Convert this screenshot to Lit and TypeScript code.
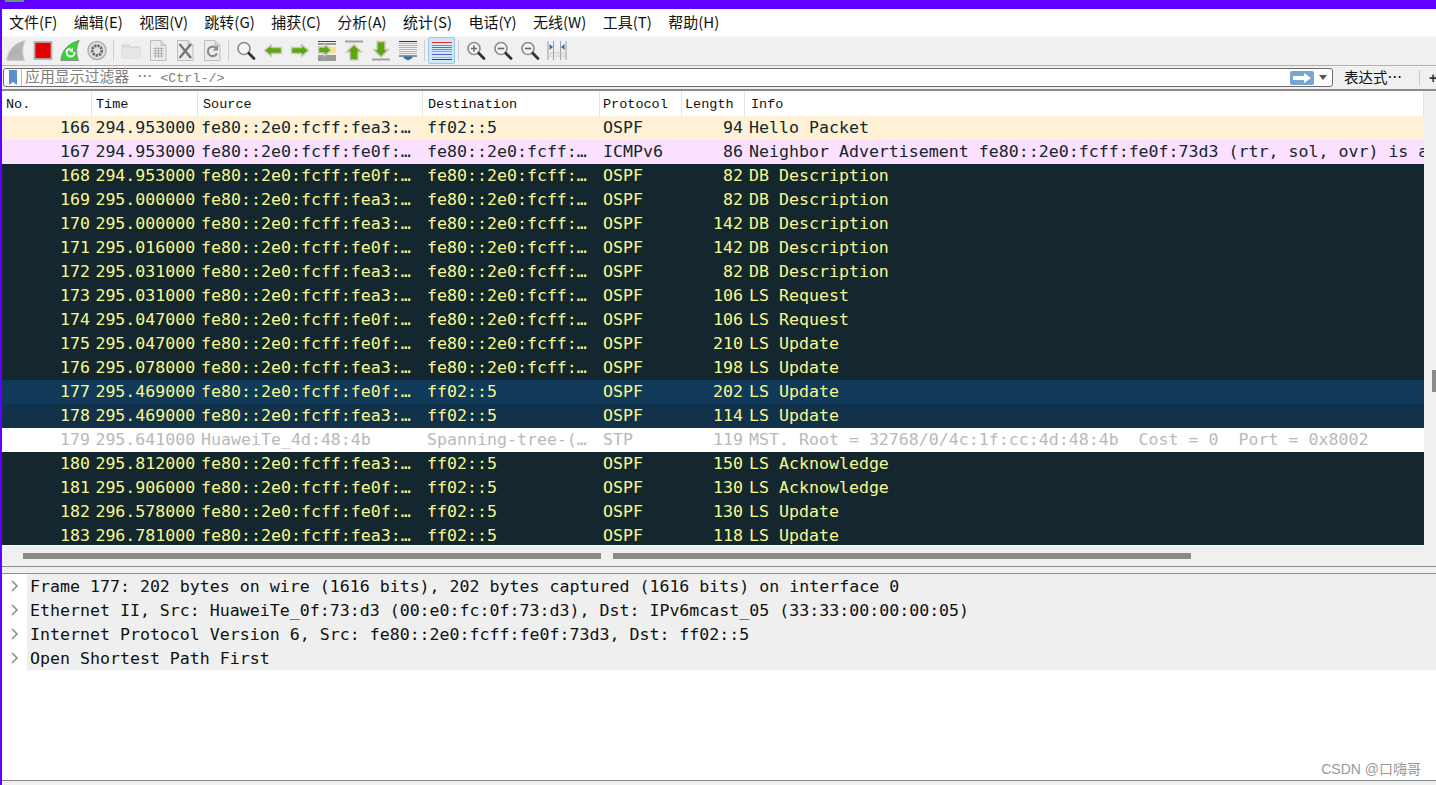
import { LitElement, html, css, svg } from "lit";
import { customElement } from "lit/decorators.js";

const F3 = "fe80::2e0:fcff:fea3:…";
const F0 = "fe80::2e0:fcff:fe0f:…";
const D = "fe80::2e0:fcff:…";
const M = "ff02::5";
type R = [number, string, string, string, string, number, string, string];
const rows: R[] = [
  [166, "294.953000", F3, M, "OSPF", 94, "Hello Packet", "hello"],
  [167, "294.953000", F0, D, "ICMPv6", 86, "Neighbor Advertisement fe80::2e0:fcff:fe0f:73d3 (rtr, sol, ovr) is a", "icmp"],
  [168, "294.953000", F0, D, "OSPF", 82, "DB Description", "dark"],
  [169, "295.000000", F3, D, "OSPF", 82, "DB Description", "dark"],
  [170, "295.000000", F3, D, "OSPF", 142, "DB Description", "dark"],
  [171, "295.016000", F0, D, "OSPF", 142, "DB Description", "dark"],
  [172, "295.031000", F3, D, "OSPF", 82, "DB Description", "dark"],
  [173, "295.031000", F3, D, "OSPF", 106, "LS Request", "dark"],
  [174, "295.047000", F0, D, "OSPF", 106, "LS Request", "dark"],
  [175, "295.047000", F0, D, "OSPF", 210, "LS Update", "dark"],
  [176, "295.078000", F3, D, "OSPF", 198, "LS Update", "dark"],
  [177, "295.469000", F0, M, "OSPF", 202, "LS Update", "sel"],
  [178, "295.469000", F3, M, "OSPF", 114, "LS Update", "rel"],
  [179, "295.641000", "HuaweiTe_4d:48:4b", "Spanning-tree-(…", "STP", 119, "MST. Root = 32768/0/4c:1f:cc:4d:48:4b  Cost = 0  Port = 0x8002", "stp"],
  [180, "295.812000", F3, M, "OSPF", 150, "LS Acknowledge", "dark"],
  [181, "295.906000", F0, M, "OSPF", 130, "LS Acknowledge", "dark"],
  [182, "296.578000", F0, M, "OSPF", 130, "LS Update", "dark"],
  [183, "296.781000", F3, M, "OSPF", 118, "LS Update", "dark"],
];
const menus = ["文件(F)", "编辑(E)", "视图(V)", "跳转(G)", "捕获(C)", "分析(A)", "统计(S)", "电话(Y)", "无线(W)", "工具(T)", "帮助(H)"];
const details = [
  "Frame 177: 202 bytes on wire (1616 bits), 202 bytes captured (1616 bits) on interface 0",
  "Ethernet II, Src: HuaweiTe_0f:73:d3 (00:e0:fc:0f:73:d3), Dst: IPv6mcast_05 (33:33:00:00:00:05)",
  "Internet Protocol Version 6, Src: fe80::2e0:fcff:fe0f:73d3, Dst: ff02::5",
  "Open Shortest Path First",
];
const heads = ["No.", "Time", "Source", "Destination", "Protocol", "Length", "Info"];

const lines = (ys: number[], c = "#555") => ys.map((y) => svg`<line x1="1" x2="19" y1=${y} y2=${y} stroke=${c} stroke-width="1"/>`);
const glass = (inner: unknown = "") => svg`<circle cx="8" cy="8.5" r="6" fill="#f4f4f4" stroke="#8d8d8d" stroke-width="1.7"/>${inner}<line x1="12.8" y1="13.3" x2="18" y2="18.5" stroke="#333" stroke-width="2.8" stroke-linecap="round"/>`;
const doc = (inner: unknown) => svg`<path d="M2.5 .5H13L18 5.5V20.5H2.5Z" fill="#ececec" stroke="#bdbdbd"/><path d="M13 .5V5.5H18" fill="#d4d4d4" stroke="#bdbdbd"/>${inner}`;
const arrow = (d: string) => svg`<path d=${d} fill="#5ea512" stroke="#c4ccba" stroke-width="1.5" stroke-linejoin="round"/>`;
const stripe = (y: number, c: string) => svg`<rect x="0" y=${y} width="20" height="1" fill=${c} shape-rendering="crispEdges"/>`;
const icons: Record<string, unknown> = {
  fin: svg`<path d="M.8 20.5C1.5 11 8 3 19.2 .5C16 7 16 14 18.5 20.5Z" fill="#b4b4b4" stroke="#cdcdcd"/>`,
  stop: svg`<rect x="1.5" y="2" width="17" height="17" fill="#e30000" stroke="#b0b0b0" stroke-width="1.8"/>`,
  restart: svg`<path d="M.8 20.5C1.5 11 8 3 19.2 .5C16 7 16 14 18.5 20.5Z" fill="#2ed52e" stroke="#8f8f8f"/><path d="M14.5 12A4 4 0 1 1 10.5 8.5" fill="none" stroke="#fff" stroke-width="2"/><path d="M9 11L13 7.5V12.5Z" fill="#fff"/>`,
  gear: svg`<circle cx="10" cy="10.5" r="9" fill="#e2e2e2" stroke="#b0b0b0" stroke-width="1.5"/><circle cx="10" cy="10.5" r="4.8" fill="none" stroke="#6e6e6e" stroke-width="2.8" stroke-dasharray="2.4 .8"/><circle cx="10" cy="10.5" r="2" fill="#dcdcdc"/>`,
  folder: svg`<path d="M1 5H8L9.5 7H19V18H1Z" fill="#dcdcdc" stroke="#d2d2d2"/><rect x="1" y="8" width="18" height="10" fill="#e6e6e6"/>`,
  file: doc(svg`<path d="M5.5 8.5H15.5M5.5 11H15.5M5.5 13.5H15.5M5.5 16H15.5M7.5 7V18M10.5 7V18M13.5 7V18" stroke="#b3b3b3" stroke-width="1" fill="none"/>`),
  close: doc(svg`<path d="M4.5 4L16 18M16 4L4.5 18" stroke="#757575" stroke-width="2.4"/>`),
  reload: doc(svg`<path d="M14.5 8.5A4.8 4.8 0 1 0 15 13.5" fill="none" stroke="#8a8a8a" stroke-width="2.2"/><path d="M16 5V10.5H10.8Z" fill="#8a8a8a"/>`),
  search: glass(),
  back: arrow("M1.5 10.5L8.5 4.5V7.5H18.5V13.5H8.5V16.5Z"),
  fwd: arrow("M18.5 10.5L11.5 4.5V7.5H1.5V13.5H11.5V16.5Z"),
  jump: svg`${lines([1.5, 4, 16, 18, 20], "#444")}<rect x="11" y="6.5" width="8" height="7" fill="#f3e88a"/>${arrow("M14 10L7.5 4V7H1.5V13H7.5V16Z")}`,
  top: svg`<line x1="1" x2="19" y1="1.5" y2="1.5" stroke="#a0a0a0" stroke-width="2"/>${arrow("M10 4.5L17.5 12H14V20H6V12H2.5Z")}`,
  bottom: svg`<line x1="1" x2="19" y1="19.5" y2="19.5" stroke="#a0a0a0" stroke-width="2"/>${arrow("M10 17L17.5 9.5H14V1.5H6V9.5H2.5Z")}`,
  auto: svg`${lines([1.5], "#333")}${lines([3.5, 5.5, 7.5, 9.5, 11.5, 13.5], "#b5b5b5")}${lines([16], "#333")}<path d="M5.5 16.5H14.5V18L10 20.5L5.5 18Z" fill="#2c6fb3"/>`,
  color: svg`${stripe(2, "#e82828")}${stripe(5, "#6f8fe0")}${stripe(7, "#f03a4a")}${stripe(9, "#a070e0")}${stripe(11, "#74d040")}${stripe(14, "#4a60c8")}${stripe(17, "#eab020")}${stripe(19, "#444")}`,
  zin: glass(svg`<path d="M4.8 8.5H11.2M8 5.3V11.7" stroke="#6a6a6a" stroke-width="1.5"/>`),
  zout: glass(svg`<path d="M4.8 8.5H11.2" stroke="#6a6a6a" stroke-width="1.7"/>`),
  zreset: glass(svg`<path d="M4.8 8.5H11.2" stroke="#6a6a6a" stroke-width="1.7"/>`),
  resize: svg`<path d="M1 1V20M6.5 1V20M13.5 1V20M19 1V20" stroke="#9e9e9e" fill="none"/><path d="M1 13H19M1 16H19" stroke="#c8c8c8"/><path d="M2.5 4L6 7L2.5 10Z" fill="#2c6fb3"/><path d="M17.5 4L14 7L17.5 10Z" fill="#2c6fb3"/>`,
};
const bar: string[] = ["fin", "stop", "restart", "gear", "|", "folder", "file", "close", "reload", "|", "search", "back", "fwd", "jump", "top", "bottom", "auto", "|", "color", "|", "zin", "zout", "zreset", "resize"];

@customElement("app-root")
export class AppRoot extends LitElement {
  static styles = css`
    :host { display: block; width: 1436px; height: 785px; overflow: hidden; background: #fff; position: relative; }
    .app { height: 785px; box-sizing: border-box; border-left: 2px solid #6000ff; display: flex; flex-direction: column; font-family: "Liberation Mono", monospace; }
    .title { height: 9px; flex: none; margin-left: -2px; background: #6000ff; position: relative; }
    .title i { position: absolute; left: 5px; top: 0; width: 19px; height: 2px; background: #5e9c76; }
    .menu { height: 26px; flex: none; box-sizing: border-box; padding: 0 0 2px 7px; display: flex; align-items: center; gap: 16.4px; background: #fff; font: 15px "Noto Sans CJK SC", sans-serif; color: #111; }
    .menu span { white-space: nowrap; }
    .tools { height: 30px; flex: none; box-sizing: border-box; margin-top: 1px; display: flex; align-items: center; padding: 0 0 1px 0; background: #f0f0f0; border-top: 1px solid #f8f8f8; border-bottom: 1px solid #b2b2b2; }
    .tool { width: 27px; height: 27px; display: flex; align-items: center; justify-content: center; flex: none; box-sizing: border-box; }
    .tool svg { width: 20px; height: 21px; }
    .tool.on { background: #cfe5f8; border: 1px solid #9cc8ec; border-radius: 2px; }
    .sep { width: 1px; height: 21px; margin: 0 3px; background: #cfcfcf; flex: none; }
    .filter { height: 25px; flex: none; box-sizing: border-box; display: flex; align-items: center; padding-left: 1px; background: #f0f0f0; border-bottom: 2px solid #8c8c8c; }
    .field { width: 1330px; height: 19px; box-sizing: border-box; border: 1px solid #6e6e6e; border-radius: 3px; background: #fff; display: flex; align-items: center; flex: none; }
    .mark { width: 17px; height: 17px; border-right: 1px solid #bdbdbd; display: flex; align-items: center; justify-content: center; flex: none; }
    .ph { flex: 1; padding: 0 0 1px 3px; color: #7d7d7d; font-size: 13.4px; line-height: 16px; white-space: pre; }
    .ph b { font: 400 14.9px/16px "Noto Sans CJK SC", sans-serif; }
    .go { width: 24px; height: 14px; border-radius: 2px; background: #7ba4d3; display: flex; align-items: center; justify-content: center; flex: none; }
    .drop { width: 18px; display: flex; justify-content: center; flex: none; }
    .drop i { border-left: 4px solid transparent; border-right: 4px solid transparent; border-top: 5px solid #555; }
    .expr { margin: 0 0 2px 11px; font: 14.5px "Noto Sans CJK SC", sans-serif; color: #111; width: 75px; flex: none; white-space: nowrap; }
    .vsep { width: 1px; height: 15px; background: #c8c8c8; flex: none; }
    .plus { margin-left: 9px; font: bold 14px "Liberation Sans", sans-serif; color: #333; }
    .main { height: 475px; flex: none; display: flex; background: #f0f0f0; }
    .table { width: 1422px; flex: none; display: flex; flex-direction: column; overflow: hidden; background: #fff; }
    .head, .row { display: grid; grid-template-columns: 90px 106px 225px 177px 82px 63px 679px; }
    .head { height: 25px; flex: none; background: #fff; font-size: 13.5px; color: #111; }
    .head span { border-right: 1px solid #e4e4e4; padding-left: 4px; line-height: 28px; overflow: hidden; }
    .head span:nth-child(3), .head span:nth-child(4) { padding-left: 5px; }
    .head span:nth-child(5), .head span:nth-child(6) { padding-left: 3px; }
    .head span:nth-child(7) { padding-left: 6px; }
    .rows { height: 429px; flex: none; overflow: hidden; }
    .row { height: 24px; font: 16.6px/24px "DejaVu Sans Mono", monospace; white-space: pre; }
    .row span { padding-left: 4px; overflow: hidden; }
    .row .s { padding-left: 3px; }
    .row .n { text-align: right; padding: 0 2px 0 0; }
    .row .p { padding-left: 3px; }
    .hello { background: #fff1d5; color: #12272e; }
    .icmp { background: #fce0ff; color: #12272e; }
    .dark { background: #15272e; color: #f7f98e; }
    .sel { background: #10395a; color: #f7f98e; }
    .rel { background: #12314a; color: #f7f98e; }
    .stp { background: #fff; color: #b9b9b9; }
    .row .tm { padding-left: 3.4px; }
    .side { flex: 1; position: relative; }
    .thumb { position: absolute; right: 0; top: 279px; width: 4px; height: 22px; background: #8a8a8a; }
    .hs { flex: 1; background: #f0f0f0; display: flex; align-items: center; box-sizing: border-box; padding: 0 0 0 21px; gap: 12px; border-top: 1px solid #fff; }
    .hs i { width: 578px; height: 6px; background: #8a8a8a; display: block; flex: none; }
    .split { height: 8px; flex: none; box-sizing: border-box; background: #f0f0f0; border-top: 1px solid #8a8f99; border-bottom: 1px solid #8a8f99; }
    .detail { flex: 1; display: flex; flex-direction: column; background: #fff; font: 16.6px/26px "DejaVu Sans Mono", monospace; color: #111; }
    .line { height: 24px; flex: none; display: flex; background: #fff; white-space: pre; }
    .line svg { width: 25px; height: 24px; flex: none; }
    .line span { flex: 1; background: #efefef; padding-left: 3px; height: 24px; }
    .foot { height: 5px; flex: none; box-sizing: border-box; margin-top: auto; background: #f0f0f0; border-top: 1px solid #8a8a8a; }
    .mark2 { position: absolute; right: 15px; top: 758px; font: 14px "Liberation Sans", "Noto Sans CJK SC", sans-serif; color: #9a9a9a; }
  `;
  render() {
    return html`<div class="app">
      <div class="title"><i></i></div>
      <div class="menu">${menus.map((m) => html`<span>${m}</span>`)}</div>
      <div class="tools">${bar.map((b) => b === "|" ? html`<div class="sep"></div>` : html`<div class="tool ${b === "color" ? "on" : ""}"><svg viewBox="0 0 20 21">${icons[b]}</svg></div>`)}</div>
      <div class="filter">
        <div class="field">
          <div class="mark"><svg width="10" height="15" viewBox="0 0 10 15"><path d="M1 0H9V15L5 12L1 15Z" fill="#5b8fd0"/></svg></div>
          <div class="ph"><b>应用显示过滤器</b> <b>…</b> &lt;Ctrl-/&gt;</div>
          <div class="go"><svg width="18" height="10" viewBox="0 0 18 10"><path d="M0 3H11V0L18 5L11 10V7H0Z" fill="#fff"/></svg></div>
          <div class="drop"><i></i></div>
        </div>
        <div class="expr">表达式…</div>
        <div class="vsep"></div>
        <div class="plus">+</div>
      </div>
      <div class="main">
        <div class="table">
          <div class="head">${heads.map((h) => html`<span>${h}</span>`)}</div>
          <div class="rows">
          ${rows.map((r) => html`<div class="row ${r[7]}">
            <span class="n">${r[0]}</span><span class="tm">${r[1]}</span><span class="s">${r[2]}</span><span>${r[3]}</span><span class="p">${r[4]}</span><span class="n">${r[5]}</span><span>${r[6]}</span>
          </div>`)}
          </div>
          <div class="hs"><i></i><i></i></div>
        </div>
        <div class="side"><div class="thumb"></div></div>
      </div>
      <div class="split"></div>
      <div class="detail">
        ${details.map((d) => html`<div class="line"><svg viewBox="0 0 25 24"><path d="M10 7L15 12L10 17" fill="none" stroke="#8a8a8a" stroke-width="1.5"/></svg><span>${d}</span></div>`)}
        <div class="foot"></div>
      </div>
    </div>
    <div class="mark2">CSDN @口嗨哥</div>`;
  }
}
